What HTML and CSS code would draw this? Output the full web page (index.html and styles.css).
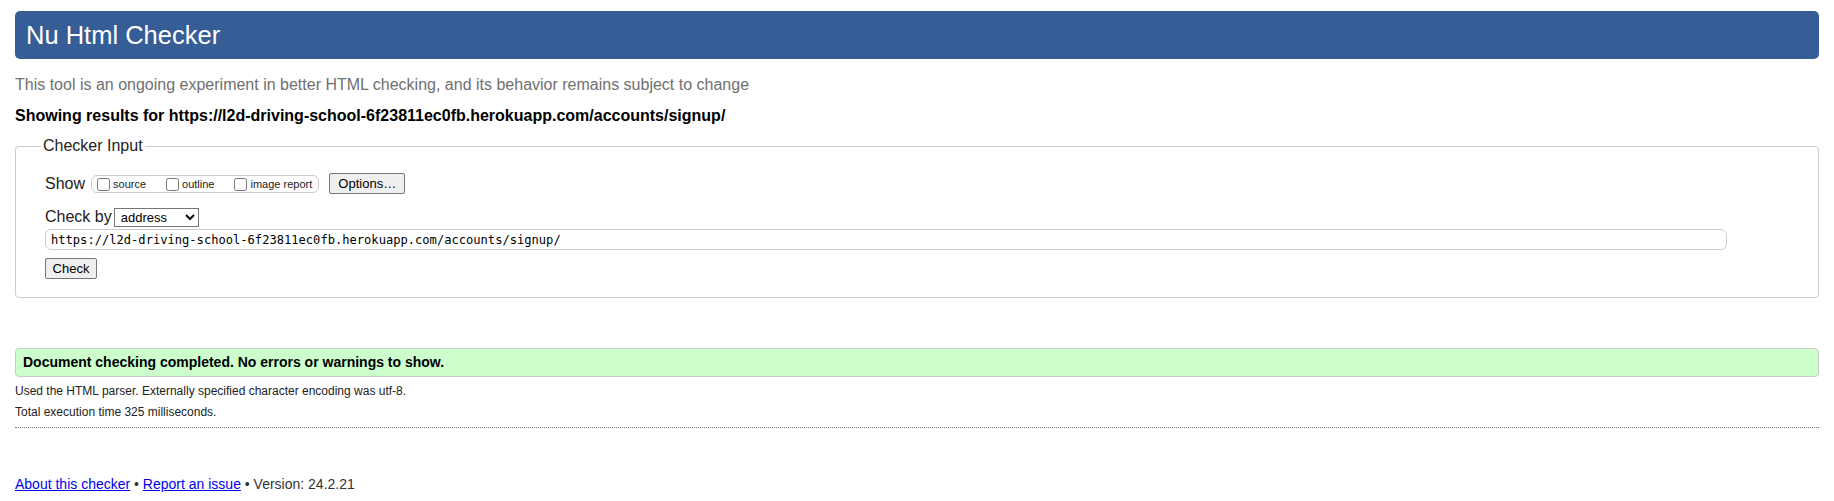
FILE: index.html
```html
<!DOCTYPE html>
<html lang="en">
<head>
<meta charset="utf-8">
<title>Nu Html Checker</title>
<link rel="stylesheet" href="styles.css">
</head>
<body>
<h1 class="title">Nu Html Checker</h1>
<p class="tagline">This tool is an ongoing experiment in better HTML checking, and its behavior remains subject to change</p>
<p class="showing">Showing results for https://l2d-driving-school-6f23811ec0fb.herokuapp.com/accounts/signup/</p>
<form class="form">
  <fieldset class="checker">
    <legend class="legend">Checker Input</legend>
    <div class="row row-show">
      <span class="row-label">Show</span>
      <span class="showbox">
        <label class="opt"><input class="cb" type="checkbox">source</label>
        <label class="opt"><input class="cb" type="checkbox">outline</label>
        <label class="opt"><input class="cb" type="checkbox">image report</label>
      </span>
      <button class="btn btn-options" type="button">Options…</button>
    </div>
    <div class="row row-by">
      <span class="row-label">Check by</span>
      <select class="sel"><option>address</option></select>
    </div>
    <input class="url" type="text" value="https://l2d-driving-school-6f23811ec0fb.herokuapp.com/accounts/signup/">
    <div class="row row-submit">
      <button class="btn btn-check" type="button">Check</button>
    </div>
  </fieldset>
</form>
<div class="success">Document checking completed. No errors or warnings to show.</div>
<p class="info">Used the HTML parser. Externally specified character encoding was utf-8.</p>
<p class="info">Total execution time 325 milliseconds.</p>
<div class="rule"></div>
<p class="footer"><a class="link" href="#">About this checker</a> • <a class="link" href="#">Report an issue</a> • Version: 24.2.21</p>
</body>
</html>
```
FILE: styles.css
```css
html, body {
  margin: 0;
  background: #fff;
}
body {
  padding: 11px 15px 0;
  font-family: "Liberation Sans", Arial, sans-serif;
  color: #000;
}
.title {
  margin: 0;
  height: 48px;
  line-height: 48px;
  padding: 0 11px;
  background: #365d95;
  color: #fff;
  font-size: 25.5px;
  font-weight: normal;
  border-radius: 5px;
}
.tagline {
  margin: 16px 0 0;
  font-size: 16px;
  line-height: 20px;
  color: #707070;
}
.showing {
  margin: 10.5px 0 0;
  font-size: 16px;
  line-height: 20px;
  font-weight: bold;
}
.form {
  margin: 10.5px 0 0;
}
.checker {
  margin: 0;
  padding: 0 29px 18px;
  border: 1px solid #ccc;
  border-radius: 4px;
  min-width: 0;
}
.legend {
  font-size: 16px;
  line-height: 20px;
  padding: 0 2px;
  margin-left: -4px;
  color: #222;
}
.row {
  display: flex;
  align-items: center;
}
.row-show {
  margin-top: 17px;
  height: 21px;
}
.row-label {
  font-size: 16px;
  line-height: 20px;
  color: #222;
}
.showbox {
  display: flex;
  align-items: center;
  gap: 17px;
  margin-left: 6px;
  height: 16px;
  padding: 0 6px 0 2px;
  border: 1px solid #ccc;
  border-radius: 6px;
}
.opt {
  display: flex;
  align-items: center;
  font-size: 11px;
  line-height: 14px;
  color: #222;
}
.cb {
  width: 13px;
  height: 13px;
  margin: 1px 3px 0 3px;
}
.btn {
  font-family: "Liberation Sans", Arial, sans-serif;
  font-size: 13px;
  line-height: 16px;
  color: #000;
  background: #efefef;
  border: 1px solid #767676;
  border-radius: 2px;
  padding: 1px 6px;
  height: 20px;
}
.btn-options {
  margin-left: 10px;
  width: 76px;
  height: 21px;
  padding: 1px 0;
}
.row-by {
  margin-top: 13px;
}
.sel {
  margin-left: 2px;
  width: 85px;
  height: 19px;
  font-family: "Liberation Sans", Arial, sans-serif;
  font-size: 13px;
  color: #000;
  border: 1px solid #767676;
  border-radius: 0;
  background: #fff;
  padding: 0 0 0 2px;
}
.url {
  display: block;
  box-sizing: border-box;
  margin: 2px 0 0;
  width: 1682px;
  height: 21px;
  padding: 0 5px;
  border: 1px solid #ccc;
  border-radius: 6px;
  font-family: "DejaVu Sans Mono", "Liberation Mono", monospace;
  font-size: 12.1px;
  color: #000;
  outline: none;
}
.row-submit {
  margin-top: 8px;
}
.btn-check {
  width: 52px;
  height: 21px;
  padding: 1px 0;
}
.success {
  margin-top: 50px;
  padding: 5px 7px;
  font-size: 14px;
  line-height: 17px;
  font-weight: bold;
  background: #ccffcc;
  border: 1px solid #c4d0c4;
  border-radius: 4px;
  color: #000;
}
.info {
  margin: 0;
  font-size: 12px;
  line-height: 21px;
  color: #222;
}
.success + .info {
  margin-top: 4px;
}
.rule {
  margin-top: 4px;
  border-top: 1px dotted #777;
}
.footer {
  margin: 46px 0 0;
  font-size: 14px;
  line-height: 20px;
  color: #333;
}
.link {
  color: #0000ee;
  text-decoration: underline;
}
```
